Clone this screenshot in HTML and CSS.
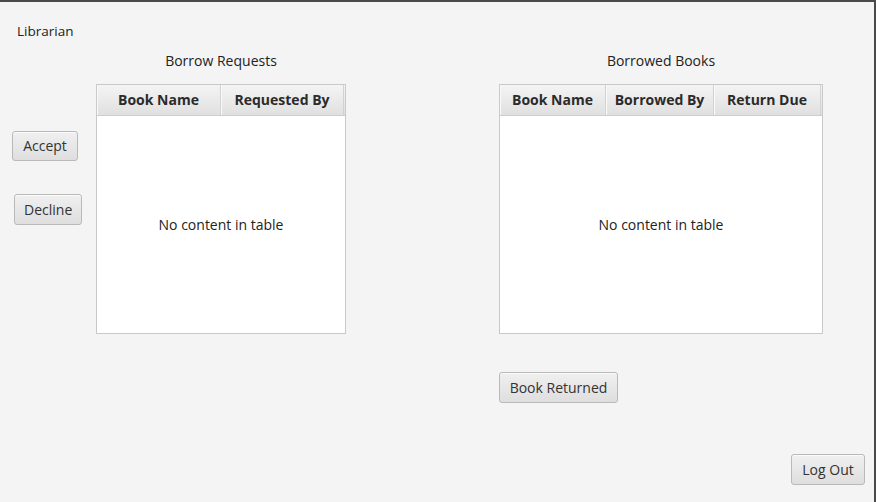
FILE: index.html
```html
<!DOCTYPE html>
<html>
<head>
<meta charset="utf-8">
<link rel="stylesheet" href="styles.css">
</head>
<body>
<div class="app">
  <div class="role">Librarian</div>
  <div class="main">
    <div class="actions">
      <button class="btn btn-accept">Accept</button>
      <button class="btn btn-decline">Decline</button>
    </div>
    <div class="panel panel-left">
      <div class="title">Borrow Requests</div>
      <div class="table">
        <div class="thead">
          <div class="th th-l1">Book Name</div>
          <div class="th th-l2">Requested By</div>
        </div>
        <div class="tbody">No content in table</div>
      </div>
    </div>
    <div class="panel panel-right">
      <div class="title">Borrowed Books</div>
      <div class="table">
        <div class="thead">
          <div class="th th-r1">Book Name</div>
          <div class="th th-r2">Borrowed By</div>
          <div class="th th-r3">Return Due</div>
        </div>
        <div class="tbody">No content in table</div>
      </div>
      <button class="btn btn-returned">Book Returned</button>
    </div>
  </div>
  <div class="footer">
    <button class="btn btn-logout">Log Out</button>
  </div>
</div>
</body>
</html>
```

FILE: styles.css
```css
* { box-sizing: border-box; }
html, body { margin: 0; padding: 0; background: #f4f4f4; }
body {
  font-family: "Open Sans", "Noto Sans", "Liberation Sans", sans-serif;
  color: #333333;
}
.app {
  width: 876px;
  height: 502px;
  background: #f4f4f4;
  border-top: 2px solid #4a4a4a;
  border-right: 2px solid #4a4a4a;
  padding-top: 20px;
  display: flex;
  flex-direction: column;
}
.role {
  margin-left: 17px;
  font-size: 13.5px;
  line-height: 18px;
  height: 18px;
  color: #222;
}
.main {
  display: flex;
  margin-top: 12px;
}
.actions {
  width: 96px;
  display: flex;
  flex-direction: column;
  align-items: flex-start;
  padding-top: 79px;
}
.btn {
  font-family: "Open Sans", "Noto Sans", sans-serif;
  font-size: 14px;
  color: #333;
  height: 31px;
  padding: 0 9px;
  border: 1px solid #b9b9b9;
  border-radius: 3px;
  background: linear-gradient(#f0f0f0, #dedede);
  box-shadow: inset 0 1px 0 #fbfbfb;
  line-height: 28px;
  cursor: default;
}
.btn-accept { margin-left: 12px; width: 66px; height: 30px; }
.btn-decline { margin-left: 14px; margin-top: 33px; width: 68px; }
.panel {
  display: flex;
  flex-direction: column;
}
.panel-left { width: 250px; }
.panel-right { width: 324px; margin-left: 153px; }
.title {
  text-align: center;
  font-size: 14px;
  line-height: 18px;
  height: 18px;
  color: #222;
  margin-bottom: 14px;
}
.table {
  height: 250px;
  background: #ffffff;
  border: 1px solid #c9c9c9;
  display: flex;
  flex-direction: column;
}
.thead {
  display: flex;
  height: 31px;
  background: linear-gradient(#f4f4f4, #e0e0e0);
  border-bottom: 1px solid #cdcdcd;
}
.th {
  font-weight: 700;
  font-size: 14px;
  line-height: 30px;
  text-align: center;
  color: #2b2b2b;
  border-right: 1px solid #d2d2d2;
  box-shadow: inset 1px 0 0 #fafafa;
  white-space: nowrap;
}
.th-l1 { width: 124px; }
.th-l2 { width: 123px; }
.th-r1 { width: 106px; }
.th-r2 { width: 108px; }
.th-r3 { width: 107px; }
.tbody {
  flex: 1;
  display: flex;
  align-items: center;
  justify-content: center;
  font-size: 14px;
  color: #222;
}
.btn-returned {
  margin-top: 38px;
  width: 119px;
  align-self: flex-start;
}
.footer {
  margin-top: auto;
  display: flex;
  justify-content: flex-end;
  padding: 0 9px 17px 0;
}
.btn-logout { width: 74px; }
```
